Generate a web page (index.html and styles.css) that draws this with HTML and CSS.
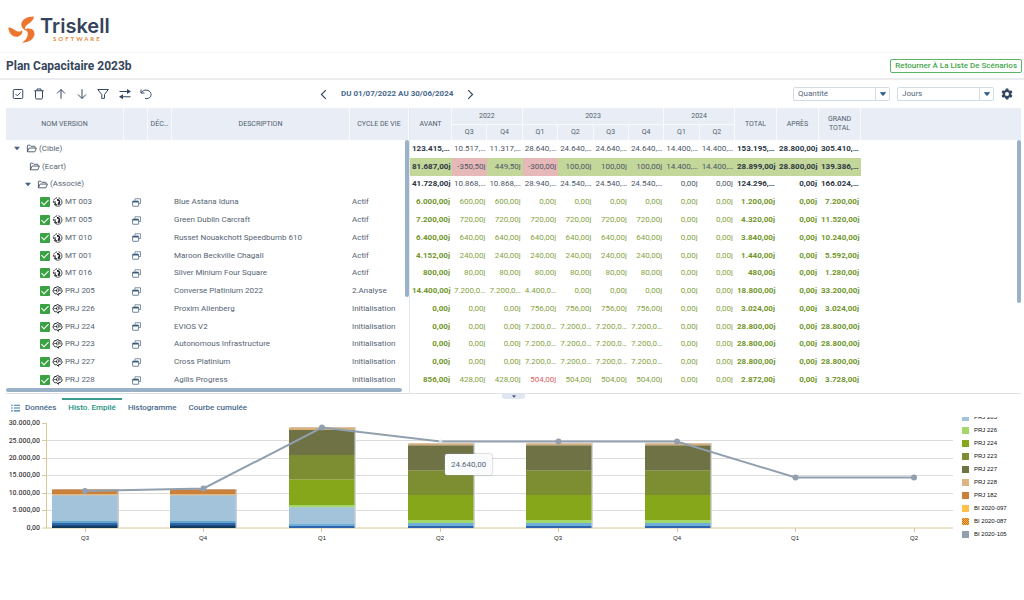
FILE: index.html
```html
<!DOCTYPE html>
<html lang="fr">
<head>
<meta charset="utf-8">
<title>Plan Capacitaire 2023b</title>
<link rel="stylesheet" href="styles.css">
</head>
<body>
<svg class="sprite" aria-hidden="true">
  <symbol id="folder" viewBox="0 0 20 16"><path d="M2.5 14V3.2Q2.5 2 3.7 2H7l2 2h6.3q1.2 0 1.2 1.2V7M2.5 14 5.6 7.2H19L16 14Z" fill="none" stroke="currentColor" stroke-width="1.7" stroke-linejoin="round"/></symbol>
  <symbol id="caret" viewBox="0 0 10 6"><path d="M1 .5h8L5 5.5z" fill="currentColor" stroke="currentColor" stroke-linejoin="round"/></symbol>
  <symbol id="copy" viewBox="0 0 18 18"><path d="M6 5V1.500h11V11h-3" fill="none" stroke="currentColor" stroke-width="1.300"/><rect x="1.200" y="6" width="12" height="10.500" rx="1" fill="#fff" stroke="currentColor" stroke-width="1.500"/><path d="M1.200 6h12v3h-12z" fill="currentColor"/></symbol>
  <symbol id="mt" viewBox="0 0 20 20"><path d="M11.500 1.600A8.500 8.500 0 1 1 3 14" fill="none" stroke="currentColor" stroke-width="1.600"/><path d="M9 1.700A8.500 8.500 0 0 0 2 12" fill="none" stroke="currentColor" stroke-width="2" stroke-dasharray="3.500 1.200"/><path d="M9 4a5.800 5.800 0 0 1 5.500 9.200l1.800 1.800-6 1 .800-6 1.500 1.300C13.300 8.500 11.500 7 9 7.300z" fill="currentColor"/><path d="M5.500 8.500a5 5 0 0 0 3.500 7.500" fill="none" stroke="currentColor" stroke-width="2.400"/></symbol>
  <symbol id="prj" viewBox="0 0 20 20"><path d="M12 18.500 8.500 15.500H6a3 3 0 0 1-3-2.500A4 4 0 0 1 2.500 6.500 4 4 0 0 1 7 2.800a4.500 4.500 0 0 1 6.500 0A4 4 0 0 1 17.500 7a4 4 0 0 1 0 6.500 4 4 0 0 1-5 1.500z" fill="none" stroke="currentColor" stroke-width="2" stroke-linejoin="round"/><path d="M3 9h5l2-5M8 9l1.500 4M17 9.500h-5l-1.500 3M12 9.500 13 6" fill="none" stroke="currentColor" stroke-width="1.300"/><circle cx="8" cy="9" r="1.500" fill="currentColor"/><circle cx="13" cy="6" r="1.500" fill="currentColor"/></symbol>
</svg>

<header class="brand">
  <svg class="brand-mark" viewBox="0 0 27 27" aria-hidden="true"><g fill="#ec7630"><path d="M26 .5C19 .3 13.500 3.500 13.300 8.500c0 2.800 1.800 4.800 4.200 5.500-1-2.300-.3-4 2-5.500C23 6 25.500 4 26 .5z"/><path d="M.3 11.500C1 18.500 6 22.300 11 20.200c2.600-1.200 3.700-3.400 3.400-6.200-1.700 1.800-3.700 2-6 .9C5.200 13.400 3.300 11 .3 11.500z"/><path d="M14 26.700c7 0 12.100-3.500 12.500-8.700.2-3.400-1.900-5.400-5.400-5.600-2.200-.1-3.900.4-5.300 1.500 2.800.2 4.200 1.500 4 4-.3 3.500-2 6-5.800 8.800z"/></g></svg>
  <div class="brand-words">
    <span class="brand-name">Triskell</span>
    <span class="brand-sub">SOFTWARE</span>
  </div>
</header>

<div class="title-bar">
  <h1>Plan Capacitaire 2023b</h1>
  <button class="back" type="button">Retourner À La Liste De Scénarios</button>
</div>

<div class="toolbar">
  <div class="tools">
    <button type="button" aria-label="Sélectionner"><svg viewBox="0 0 24 24"><rect x="2.500" y="3" width="19" height="18" rx="2"/><path d="m7 12 3.500 3.500L17 9"/></svg></button>
    <button type="button" aria-label="Supprimer"><svg viewBox="0 0 24 24"><path d="M2.500 5.500h19M8 5V2h8v3M5 6v13.500q0 2.500 2.500 2.500h9q2.500 0 2.500-2.500V6"/></svg></button>
    <button type="button" aria-label="Monter"><svg viewBox="0 0 24 24"><path d="M12 21.500V3M4 11l8-8 8 8"/></svg></button>
    <button type="button" aria-label="Descendre"><svg viewBox="0 0 24 24"><path d="M12 2.500V21M4 13l8 8 8-8"/></svg></button>
    <button type="button" aria-label="Filtrer"><svg viewBox="0 0 24 24"><path d="M1.500 3h21L15 13v7.500L9.500 21v-8z"/></svg></button>
    <button type="button" aria-label="Échanger"><svg viewBox="0 0 24 24"><path d="M1 7h17M23 17.500H6"/><path d="m16 2 8 5-8 5zM8 12.500l-8 5 8 5z" fill="currentColor" stroke="none"/></svg></button>
    <button type="button" aria-label="Annuler"><svg viewBox="0 0 24 24"><path d="M2 3v7h7M2.500 9.500C6 4 13 2.500 18 6s5.500 10 1 13.500c-3 2-7 2-9 1"/></svg></button>
  </div>
  <nav class="period">
    <button type="button" aria-label="Période précédente"><svg viewBox="0 0 12 18"><path d="m10 1.500-7.500 7.500 7.500 7.500"/></svg></button>
    <span>DU 01/07/2022 AU 30/06/2024</span>
    <button type="button" aria-label="Période suivante"><svg viewBox="0 0 12 18"><path d="m2 1.500 7.500 7.500-7.500 7.500"/></svg></button>
  </nav>
  <div class="options">
    <div class="combo"><select aria-label="Mesure"><option>Quantité</option></select><span class="arrow"><svg viewBox="0 0 10 6"><use href="#caret"/></svg></span></div>
    <div class="combo"><select aria-label="Unité"><option>Jours</option></select><span class="arrow"><svg viewBox="0 0 10 6"><use href="#caret"/></svg></span></div>
    <button class="gear" type="button" aria-label="Paramètres"><svg viewBox="0 0 24 24"><path fill="currentColor" fill-rule="evenodd" d="M9.500 1h5l.7 3.200 2 1.100 3.200-1 2.500 4.300L20.500 11v2l2.400 2.400-2.500 4.300-3.200-1-2 1.100-.7 3.200h-5l-.7-3.200-2-1.100-3.200 1-2.500-4.300L3.500 13v-2L1.100 8.600l2.500-4.300 3.200 1 2-1.100zM12 8a4 4 0 1 0 0 8 4 4 0 0 0 0-8z"/></svg></button>
  </div>
</div>

<main>
<div class="grid">
  <section class="pane-left">
    <table class="versions">
      <colgroup><col class="w-name"><col class="w-icon"><col class="w-icon"><col><col class="w-cycle"></colgroup>
      <thead><tr><th>NOM VERSION</th><th></th><th>DÉC…</th><th>DESCRIPTION</th><th>CYCLE DE VIE</th></tr></thead>
      <tbody>
        <tr><td><div class="node l0"><svg class="tw"><use href="#caret"/></svg><svg class="fo"><use href="#folder"/></svg>(Cible)</div></td><td></td><td></td><td></td><td></td></tr>
        <tr><td><div class="node l1"><svg class="fo"><use href="#folder"/></svg>(Ecart)</div></td><td></td><td></td><td></td><td></td></tr>
        <tr><td><div class="node l2"><svg class="tw"><use href="#caret"/></svg><svg class="fo"><use href="#folder"/></svg>(Associé)</div></td><td></td><td></td><td></td><td></td></tr>
        <tr><td><div class="node l3"><input type="checkbox" checked aria-label="MT 003"><svg class="ty"><use href="#mt"/></svg>MT 003</div></td><td><svg class="cp"><use href="#copy"/></svg></td><td></td><td>Blue Astana Iduna</td><td>Actif</td></tr>
        <tr><td><div class="node l3"><input type="checkbox" checked aria-label="MT 005"><svg class="ty"><use href="#mt"/></svg>MT 005</div></td><td><svg class="cp"><use href="#copy"/></svg></td><td></td><td>Green Dublin Carcraft</td><td>Actif</td></tr>
        <tr><td><div class="node l3"><input type="checkbox" checked aria-label="MT 010"><svg class="ty"><use href="#mt"/></svg>MT 010</div></td><td><svg class="cp"><use href="#copy"/></svg></td><td></td><td>Russet Nouakchott Speedbumb 610</td><td>Actif</td></tr>
        <tr><td><div class="node l3"><input type="checkbox" checked aria-label="MT 001"><svg class="ty"><use href="#mt"/></svg>MT 001</div></td><td><svg class="cp"><use href="#copy"/></svg></td><td></td><td>Maroon Beckville Chagall</td><td>Actif</td></tr>
        <tr><td><div class="node l3"><input type="checkbox" checked aria-label="MT 016"><svg class="ty"><use href="#mt"/></svg>MT 016</div></td><td><svg class="cp"><use href="#copy"/></svg></td><td></td><td>Silver Minium Four Square</td><td>Actif</td></tr>
        <tr><td><div class="node l3"><input type="checkbox" checked aria-label="PRJ 205"><svg class="ty"><use href="#prj"/></svg>PRJ 205</div></td><td><svg class="cp"><use href="#copy"/></svg></td><td></td><td>Converse Platinium 2022</td><td>2.Analyse</td></tr>
        <tr><td><div class="node l3"><input type="checkbox" checked aria-label="PRJ 226"><svg class="ty"><use href="#prj"/></svg>PRJ 226</div></td><td><svg class="cp"><use href="#copy"/></svg></td><td></td><td>Proxim Allenberg</td><td>Initialisation</td></tr>
        <tr><td><div class="node l3"><input type="checkbox" checked aria-label="PRJ 224"><svg class="ty"><use href="#prj"/></svg>PRJ 224</div></td><td><svg class="cp"><use href="#copy"/></svg></td><td></td><td>EVIOS V2</td><td>Initialisation</td></tr>
        <tr><td><div class="node l3"><input type="checkbox" checked aria-label="PRJ 223"><svg class="ty"><use href="#prj"/></svg>PRJ 223</div></td><td><svg class="cp"><use href="#copy"/></svg></td><td></td><td>Autonomous Infrastructure</td><td>Initialisation</td></tr>
        <tr><td><div class="node l3"><input type="checkbox" checked aria-label="PRJ 227"><svg class="ty"><use href="#prj"/></svg>PRJ 227</div></td><td><svg class="cp"><use href="#copy"/></svg></td><td></td><td>Cross Platinium</td><td>Initialisation</td></tr>
        <tr><td><div class="node l3"><input type="checkbox" checked aria-label="PRJ 228"><svg class="ty"><use href="#prj"/></svg>PRJ 228</div></td><td><svg class="cp"><use href="#copy"/></svg></td><td></td><td>Agilis Progress</td><td>Initialisation</td></tr>
      </tbody>
    </table>
    <div class="vbar"></div>
    <div class="hbar"></div>
  </section>
  <section class="pane-right">
    <table class="figures">
      <colgroup><col class="w-sum"><col><col><col><col><col><col><col><col><col class="w-sum"><col class="w-sum"><col class="w-sum"></colgroup>
      <thead>
        <tr><th rowspan="2">AVANT</th><th colspan="2">2022</th><th colspan="4">2023</th><th colspan="2">2024</th><th rowspan="2">TOTAL</th><th rowspan="2">APRÈS</th><th rowspan="2" class="two">GRAND TOTAL</th></tr>
        <tr class="quarters"><th>Q3</th><th>Q4</th><th>Q1</th><th>Q2</th><th>Q3</th><th>Q4</th><th>Q1</th><th>Q2</th></tr>
      </thead>
      <tbody>
        <tr class="dark"><td class="cut b">123.415,…</td><td class="cut">10.517,…</td><td class="cut">11.317,…</td><td class="cut">28.640,…</td><td class="cut">24.640,…</td><td class="cut">24.640,…</td><td class="cut">24.640,…</td><td class="cut">14.400,…</td><td class="cut">14.400,…</td><td class="cut b">153.195,…</td><td class="b">28.800,00j</td><td class="cut b">305.410,…</td></tr>
        <tr class="dark gap"><td class="b">81.687,00j</td><td class="neg">-350,50j</td><td>449,50j</td><td class="neg">-300,00j</td><td>100,00j</td><td>100,00j</td><td>100,00j</td><td class="cut">14.400,…</td><td class="cut">14.400,…</td><td class="b">28.899,00j</td><td class="b">28.800,00j</td><td class="cut b">139.386,…</td></tr>
        <tr class="dark"><td class="b">41.728,00j</td><td class="cut">10.868,…</td><td class="cut">10.868,…</td><td class="cut">28.940,…</td><td class="cut">24.540,…</td><td class="cut">24.540,…</td><td class="cut">24.540,…</td><td>0,00j</td><td>0,00j</td><td class="cut b">124.296,…</td><td class="b">0,00j</td><td class="cut b">166.024,…</td></tr>
        <tr><td class="b">6.000,00j</td><td>600,00j</td><td>600,00j</td><td>0,00j</td><td>0,00j</td><td>0,00j</td><td>0,00j</td><td>0,00j</td><td>0,00j</td><td class="b">1.200,00j</td><td class="b">0,00j</td><td class="b">7.200,00j</td></tr>
        <tr><td class="b">7.200,00j</td><td>720,00j</td><td>720,00j</td><td>720,00j</td><td>720,00j</td><td>720,00j</td><td>720,00j</td><td>0,00j</td><td>0,00j</td><td class="b">4.320,00j</td><td class="b">0,00j</td><td class="b">11.520,00j</td></tr>
        <tr><td class="b">6.400,00j</td><td>640,00j</td><td>640,00j</td><td>640,00j</td><td>640,00j</td><td>640,00j</td><td>640,00j</td><td>0,00j</td><td>0,00j</td><td class="b">3.840,00j</td><td class="b">0,00j</td><td class="b">10.240,00j</td></tr>
        <tr><td class="b">4.152,00j</td><td>240,00j</td><td>240,00j</td><td>240,00j</td><td>240,00j</td><td>240,00j</td><td>240,00j</td><td>0,00j</td><td>0,00j</td><td class="b">1.440,00j</td><td class="b">0,00j</td><td class="b">5.592,00j</td></tr>
        <tr><td class="b">800,00j</td><td>80,00j</td><td>80,00j</td><td>80,00j</td><td>80,00j</td><td>80,00j</td><td>80,00j</td><td>0,00j</td><td>0,00j</td><td class="b">480,00j</td><td class="b">0,00j</td><td class="b">1.280,00j</td></tr>
        <tr><td class="b">14.400,00j</td><td class="cut">7.200,0…</td><td class="cut">7.200,0…</td><td class="cut">4.400,0…</td><td>0,00j</td><td>0,00j</td><td>0,00j</td><td>0,00j</td><td>0,00j</td><td class="b">18.800,00j</td><td class="b">0,00j</td><td class="b">33.200,00j</td></tr>
        <tr><td class="b">0,00j</td><td>0,00j</td><td>0,00j</td><td>756,00j</td><td>756,00j</td><td>756,00j</td><td>756,00j</td><td>0,00j</td><td>0,00j</td><td class="b">3.024,00j</td><td class="b">0,00j</td><td class="b">3.024,00j</td></tr>
        <tr><td class="b">0,00j</td><td>0,00j</td><td>0,00j</td><td class="cut">7.200,0…</td><td class="cut">7.200,0…</td><td class="cut">7.200,0…</td><td class="cut">7.200,0…</td><td>0,00j</td><td>0,00j</td><td class="b">28.800,00j</td><td class="b">0,00j</td><td class="b">28.800,00j</td></tr>
        <tr><td class="b">0,00j</td><td>0,00j</td><td>0,00j</td><td class="cut">7.200,0…</td><td class="cut">7.200,0…</td><td class="cut">7.200,0…</td><td class="cut">7.200,0…</td><td>0,00j</td><td>0,00j</td><td class="b">28.800,00j</td><td class="b">0,00j</td><td class="b">28.800,00j</td></tr>
        <tr><td class="b">0,00j</td><td>0,00j</td><td>0,00j</td><td class="cut">7.200,0…</td><td class="cut">7.200,0…</td><td class="cut">7.200,0…</td><td class="cut">7.200,0…</td><td>0,00j</td><td>0,00j</td><td class="b">28.800,00j</td><td class="b">0,00j</td><td class="b">28.800,00j</td></tr>
        <tr><td class="b">856,00j</td><td>428,00j</td><td>428,00j</td><td class="red">504,00j</td><td>504,00j</td><td>504,00j</td><td>504,00j</td><td>0,00j</td><td>0,00j</td><td class="b">2.872,00j</td><td class="b">0,00j</td><td class="b">3.728,00j</td></tr>
      </tbody>
    </table>
    <div class="head-fill"></div>
    <div class="vbar"></div>
  </section>
</div>

<div class="splitter"><button type="button" aria-label="Réduire"><svg viewBox="0 0 10 6"><use href="#caret"/></svg></button></div>

<div class="tabs" role="tablist">
  <button type="button" role="tab"><svg class="list-icon" viewBox="0 0 16 14"><path d="M0 2h3M5 2h11M0 7h3M5 7h11M0 12h3M5 12h11" stroke="currentColor" stroke-width="2"/></svg>Données</button>
  <button type="button" role="tab" aria-selected="true" class="active">Histo. Empilé</button>
  <button type="button" role="tab">Histogramme</button>
  <button type="button" role="tab">Courbe cumulée</button>
</div>

<div class="chart-row">
  <div class="chart">
    <svg class="plot" viewBox="0 0 956 129" role="img" aria-label="Histogramme empilé">
      <path d="M46 26.500h907M46 44.500h907M46 61.500h907M46 79.500h907M46 96.500h907" stroke="#dcdcdc"/>
      <path d="M46.500 9v105M42 9.500h4M42 26.500h4M42 44.500h4M42 61.500h4M42 79.500h4M42 96.500h4M42 114h911M85.500 114v4M203.500 114v4M321.500 114v4M440.500 114v4M558.500 114v4M677.500 114v4M795.500 114v4M914.500 114v4" stroke="#dcc79b" fill="none"/>
      <g class="ylab"><text x="40" y="11">30.000,00</text><text x="40" y="29">25.000,00</text><text x="40" y="46">20.000,00</text><text x="40" y="63">15.000,00</text><text x="40" y="81">10.000,00</text><text x="40" y="98">5.000,00</text><text x="40" y="116">0,00</text></g>
      <defs>
        <g id="bar-a"><rect x="1" y="75" width="66" height="39" fill="#c9cdd3"/><rect y="75.500" width="65.500" height="5" fill="#cb803c"/><rect y="80" width="65.500" height="1.500" fill="#e3b97c"/><rect y="81.500" width="65.500" height="26" fill="#a3c3db"/><rect y="107" width="65.500" height="2" fill="#62a8cc"/><rect y="109" width="65.500" height="3" fill="#2f65ac"/><rect y="111.500" width="65.500" height="2.500" fill="#123a5c"/></g>
        <g id="bar-c"><rect x="1" y="29" width="66" height="85" fill="#d3d6da"/><rect y="29.500" width="65.500" height="2" fill="#d9ae77"/><rect y="31.500" width="65.500" height="25" fill="#6f7245"/><rect y="56.500" width="65.500" height="24.500" fill="#7d8e32"/><rect y="81" width="65.500" height="25" fill="#87a71a"/><rect y="106" width="65.500" height="3" fill="#a3d769"/><rect y="109" width="65.500" height="3" fill="#6fb0d8"/><rect y="112" width="65.500" height="2" fill="#2f65ac"/></g>
      </defs>
      <use href="#bar-a" x="52"/><use href="#bar-a" x="170"/>
      <g transform="translate(289 0)"><rect x="1" y="13" width="66" height="101" fill="#d3d6da"/><rect y="13.500" width="65.500" height="2.500" fill="#d9ae77"/><rect y="16" width="65.500" height="25" fill="#6f7245"/><rect y="41" width="65.500" height="24.500" fill="#7d8e32"/><rect y="65.500" width="65.500" height="26" fill="#87a71a"/><rect y="91" width="65.500" height="2.500" fill="#a3d769"/><rect y="93.500" width="65.500" height="17" fill="#a3c3db"/><rect y="110" width="65.500" height="2" fill="#6fb0d8"/><rect y="112" width="65.500" height="2" fill="#2f65ac"/></g>
      <use href="#bar-c" x="408"/><use href="#bar-c" x="526"/><use href="#bar-c" x="645"/>
      <path d="M85 77 203.500 74.500 322 13.500 440.500 27.500H677L795.500 63.500H914" fill="none" stroke="#929fae" stroke-width="2"/>
      <g fill="#929fae"><circle cx="85" cy="77" r="3"/><circle cx="203.500" cy="74.500" r="3"/><circle cx="322" cy="13.500" r="3"/><circle cx="440.500" cy="27.500" r="2" fill="#d5e0e2"/><circle cx="558.500" cy="27.500" r="3"/><circle cx="677" cy="27.500" r="3"/><circle cx="795.500" cy="63.500" r="3"/><circle cx="914" cy="63.500" r="3"/></g>
      <g class="xlab"><text x="85" y="126">Q3</text><text x="203" y="126">Q4</text><text x="322" y="126">Q1</text><text x="440" y="126">Q2</text><text x="558" y="126">Q3</text><text x="677" y="126">Q4</text><text x="795" y="126">Q1</text><text x="914" y="126">Q2</text></g>
    </svg>
    <div class="tip">24.640,00</div>
  </div>
  <ul class="legend">
    <li><i class="k205"></i>PRJ 205</li>
    <li><i class="k226"></i>PRJ 226</li>
    <li><i class="k224"></i>PRJ 224</li>
    <li><i class="k223"></i>PRJ 223</li>
    <li><i class="k227"></i>PRJ 227</li>
    <li><i class="k228"></i>PRJ 228</li>
    <li><i class="k182"></i>PRJ 182</li>
    <li><i class="k097"></i>BI 2020-097</li>
    <li><i class="k087"></i>BI 2020-087</li>
    <li><i class="k105"></i>BI 2020-105</li>
  </ul>
</div>
</main>
</body>
</html>
```
FILE: styles.css
```css
* { box-sizing: border-box; }
body { margin: 0; background: #fff; color: #566474; font: 8px/10px Roboto, "Liberation Sans", sans-serif; }
button { margin: 0; padding: 0; border: 0; background: none; font: inherit; color: inherit; cursor: pointer; }
svg { display: block; }
.sprite { display: none; }

.brand { display: flex; gap: 5px; height: 53px; padding: 16px 8px 0; border-bottom: 1px solid #f4f5f7; }
.brand-mark { width: 27px; height: 27px; }
.brand-words { display: flex; flex-direction: column; }
.brand-name { font: 600 20px/20px Inter, sans-serif; color: #35435c; }
.brand-sub { padding-left: 13px; font: 700 6px/6px Lato, sans-serif; letter-spacing: 2px; color: #e08a3c; }

.title-bar { display: flex; align-items: center; justify-content: space-between; height: 27px; padding: 0 2px 0 6px; border-bottom: 2px solid #ececee; }
h1 { margin: 0; font-size: 12px; line-height: 16px; font-weight: 700; color: #35465c; }
.back { height: 14px; padding: 0 4px; border: 1px solid #5cb562; border-radius: 2px; color: #43a64b; font-weight: 500; }

.toolbar { display: flex; align-items: center; height: 28px; padding: 0 11px 0 12px; color: #33475f; }
.toolbar svg { fill: none; stroke: currentColor; stroke-width: 2; }
.tools { display: flex; justify-content: space-between; width: 140px; }
.tools svg { width: 12px; height: 12px; }
.period { display: flex; align-items: center; gap: 14px; margin-left: 168px; font-weight: 700; color: #48698b; }
.period svg { width: 7px; height: 11px; color: #2f4760; stroke-width: 2; }
.options { display: flex; align-items: center; gap: 7px; margin-left: auto; }
.combo { position: relative; width: 97px; height: 14px; }
.combo select { appearance: none; width: 100%; height: 100%; padding: 0 18px 0 4px; border: 1px solid #d3dbe7; border-radius: 2px; background: #fff; color: #55677b; font: inherit; }
.arrow { position: absolute; top: 0; right: 0; width: 15px; height: 14px; display: grid; place-items: center; border-left: 1px solid #d3dbe7; pointer-events: none; color: #2e5f8f; }
.arrow svg { width: 6px; height: 4px; stroke: none; }
.gear svg { width: 12px; height: 12px; stroke: none; }

.grid { display: flex; padding: 0 3px 0 6px; }
.pane-left { position: relative; flex: 0 0 404px; padding-bottom: 4px; border-right: 1px solid #e3e7ee; }
.pane-right { position: relative; flex: 1; display: flex; align-items: flex-start; }
table { table-layout: fixed; border-collapse: separate; border-spacing: 0; height: 281px; }
.versions { width: 100%; }
.figures { width: 451px; flex: none; }
.w-name { width: 118px; }
.w-icon { width: 24px; }
.w-cycle { width: 59px; }
.w-sum { width: 42px; }
th { height: 32px; padding: 0; background: #e9eef6; border-right: 1px solid #f8fafc; font-size: 7px; line-height: 9px; font-weight: 400; color: #505d6c; white-space: nowrap; overflow: hidden; }
.figures thead th { height: 16px; }
.figures .quarters th { border-top: 1px solid #f8fafc; }
.figures .two { white-space: normal; padding: 0 6px; }
.head-fill { flex: 1; height: 32px; background: #e9eef6; }
td { padding: 0 2px; white-space: nowrap; vertical-align: middle; line-height: 10px; }
.versions td:first-child { padding: 0; }
.figures td { padding: 0 2px; text-align: right; color: #85a33f; }
.figures td.b { font-weight: 700; color: #6f962a; }
.figures td.cut { text-align: left; }
.figures .dark td { color: #4b5666; }
.figures .dark td.b { color: #2b3644; }
.figures .gap td { background: #c4d79b; }
.figures .gap td.neg { background: #e6b8b7; }
.figures td.red { color: #d9625c; }
.node { display: flex; align-items: center; }
.l0 { padding-left: 8px; }
.l1 { padding-left: 23px; }
.l2 { padding-left: 19px; }
.l3 { padding-left: 34px; }
.tw { width: 6px; height: 5px; margin-right: 6px; color: #4a6480; }
.fo { width: 11px; height: 9px; margin-right: 2px; color: #4a5a6c; }
.ty { width: 11px; height: 10px; margin: 0 2px 0 2px; color: #20242a; }
.cp { width: 9px; height: 9px; margin-left: 6px; color: #3d5b7a; }
input[type="checkbox"] { appearance: none; display: grid; place-items: center; width: 10px; height: 10px; margin: 0; border-radius: 1px; background: #3aa243; }
input[type="checkbox"]::before { content: ""; width: 3px; height: 6px; margin-bottom: 2px; border: solid #fff; border-width: 0 1px 1px 0; transform: rotate(45deg); }
.vbar { position: absolute; top: 32px; right: 0; width: 4px; height: 157px; border-radius: 2px; background: #9bb1c8; }
.pane-right .vbar { height: 163px; }
.hbar { position: absolute; left: 0; right: 7px; bottom: 1px; height: 4px; border-radius: 2px; background: #9bb1c8; }

.splitter { display: flex; justify-content: center; height: 5px; margin: 0 3px 0 6px; border-top: 1px solid #dfe2e6; }
.splitter button { display: grid; place-items: center; width: 23px; height: 5px; border-radius: 0 0 3px 3px; background: #e1e7f0; color: #2b3f56; }
.splitter svg { width: 4px; height: 3px; }

.tabs { display: flex; height: 16px; padding-left: 5px; font-weight: 500; color: #48698b; }
.tabs button { display: flex; align-items: center; gap: 5px; height: 17px; padding: 0 6px; border-top: 2px solid transparent; }
.tabs .active { border-top-color: #3a9c8e; color: #23937f; }
.list-icon { width: 9px; height: 8px; color: #3e7ab0; }

.chart-row { display: flex; align-items: flex-start; }
.chart { position: relative; flex: 0 1 956px; }
.plot { width: 100%; }
.ylab { text-anchor: end; font: 500 7px Roboto, sans-serif; fill: #444; }
.xlab { text-anchor: middle; font: 6px "Liberation Sans", sans-serif; fill: #222; }
.tip { position: absolute; left: 445px; top: 40px; padding: 5px 6px; border-radius: 2px; background: #fafbfc; box-shadow: 0 0 2px #8d96a3; line-height: 11px; color: #55677b; }
.legend { display: flex; flex-direction: column; justify-content: flex-end; height: 124px; margin: 3px 0 0; padding: 0 0 0 6px; overflow: hidden; list-style: none; font: 6px/13px "Liberation Sans", sans-serif; color: #111; }
.legend li { display: flex; align-items: center; gap: 5px; flex: none; height: 13px; white-space: nowrap; }
.legend i { width: 7px; height: 7px; }
.k205 { background: #a3c3db; }
.k226 { background: #a3d769; }
.k224 { background: #87a71a; }
.k223 { background: #7d8e32; }
.k227 { background: #6f7245; }
.k228 { background: #dbb684; }
.k182 { background: #cb803c; }
.k097 { background: #ffc04d; }
.k087 { background: repeating-conic-gradient(#c8702a 0 25%, #ffb640 0 50%) 0 0 / 2px 2px; }
.k105 { background: #929fae; }
```
